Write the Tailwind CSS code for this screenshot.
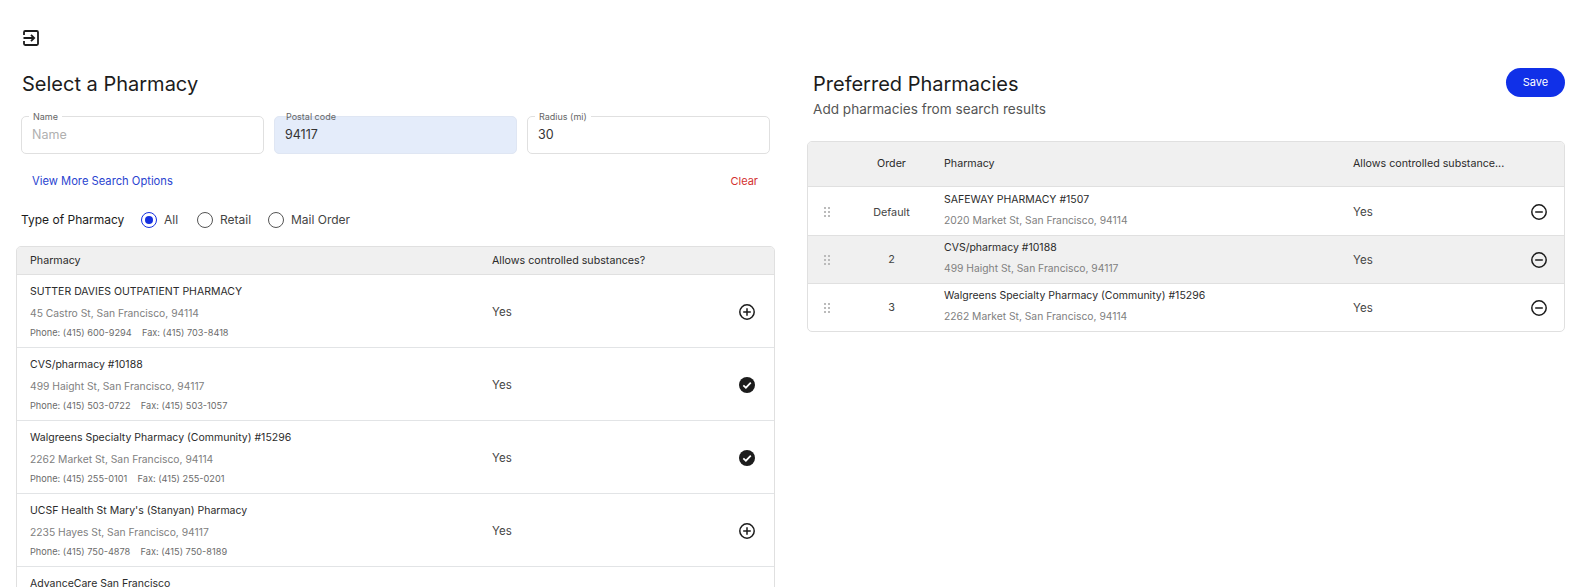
<!DOCTYPE html>
<html lang="en">
<head>
  <meta charset="UTF-8" />
  <title>Select a Pharmacy</title>
  <script src="https://cdn.jsdelivr.net/npm/@tailwindcss/browser@4"></script>
</head>
<body class="h-screen overflow-hidden bg-white text-[#2b2b2b] font-['Inter',sans-serif]">

  <!-- back icon -->
  <div class="pl-[23px] pt-[30px] h-[68px]">
    <svg class="w-[16px] h-[16px]" viewBox="0 0 16 16" fill="none" stroke="#1c1c1c" stroke-width="1.800">
      <path d="M1 5V2.200C1 1.500 1.500 1 2.200 1H13.800C14.500 1 15 1.500 15 2.200V13.800C15 14.500 14.500 15 13.800 15H2.200C1.500 15 1 14.500 1 13.800V11" />
      <path d="M0.500 8H11M8 4.800L11.200 8L8 11.200" />
    </svg>
  </div>

  <div class="flex pl-[16px] pr-[19px] gap-[32px]">

    <!-- search column -->
    <section class="w-[759px] shrink-0">
      <h1 class="ml-[6px] h-[32px] leading-[32px] text-[20px] text-[#1c1c1c]">Select a Pharmacy</h1>

      <div class="ml-[5px] mr-[5px] mt-[16px] grid grid-cols-3 gap-[10px]">
        <div class="relative h-[38px] border border-[#e0e0e0] rounded-[5px] flex items-center px-[10px] text-[12.500px] text-[#b0b0b0]">
          Name
          <span class="absolute -top-[6px] left-[7px] bg-white px-[4px] text-[9px] leading-[11px] text-[#666]">Name</span>
        </div>
        <div class="relative h-[38px] border border-[#dfe6f3] rounded-[5px] bg-[#e4ecfa] flex items-center px-[10px] text-[12.500px] text-[#333]">
          94117
          <span class="absolute -top-[6px] left-[7px] px-[4px] text-[9px] leading-[11px] text-[#666]">Postal code</span>
        </div>
        <div class="relative h-[38px] border border-[#e0e0e0] rounded-[5px] flex items-center px-[10px] text-[12.500px] text-[#333]">
          30
          <span class="absolute -top-[6px] left-[7px] bg-white px-[4px] text-[9px] leading-[11px] text-[#666]">Radius (mi)</span>
        </div>
      </div>

      <div class="mt-[19px] h-[16px] flex items-center justify-between pl-[16px] pr-[17px] text-[11px] leading-[16px]">
        <a class="text-[#2a44d0] text-[11.200px]">View More Search Options</a>
        <a class="text-[#d32f2f]">Clear</a>
      </div>

      <div class="ml-[5px] mt-[21px] h-[20px] flex items-center text-[12px] text-[#444]">
        <span class="w-[120px] text-[#1c1c1c]">Type of Pharmacy</span>
        <span class="w-[16px] h-[16px] rounded-full border-[1.500px] border-[#1530e0] flex items-center justify-center">
          <span class="w-[8px] h-[8px] rounded-full bg-[#1530e0]"></span>
        </span>
        <span class="ml-[7px] w-[33px]">All</span>
        <span class="w-[16px] h-[16px] rounded-full border-[1.500px] border-[#555]"></span>
        <span class="ml-[7px] w-[48px]">Retail</span>
        <span class="w-[16px] h-[16px] rounded-full border-[1.500px] border-[#555]"></span>
        <span class="ml-[7px]">Mail Order</span>
      </div>

      <div class="mt-[16px] border border-[#e0e0e0] rounded-[5px] overflow-hidden">
        <div class="h-[28px] pt-[1px] bg-[#f0f0f0] border-b border-[#e0e0e0] flex items-center text-[10.700px]">
          <span class="w-[475px] pl-[13px]">Pharmacy</span>
          <span>Allows controlled substances?</span>
        </div>

        <div class="h-[73px] border-b border-[#e2e4e6] flex items-center">
          <div class="w-[475px] pl-[13px]">
            <div class="text-[10.500px] leading-[22px]">SUTTER DAVIES OUTPATIENT PHARMACY</div>
            <div class="text-[10.300px] leading-[20px] text-[#808080]">45 Castro St, San Francisco, 94114</div>
            <div class="text-[9.200px] leading-[19px] text-[#6b6b6b]">Phone: (415) 600-9294 &nbsp;&nbsp; Fax: (415) 703-8418</div>
          </div>
          <span class="flex-1 pt-[3px] text-[11.500px] text-[#444]">Yes</span>
          <svg class="mr-[19px] mt-[2px] w-[16px] h-[16px]" viewBox="0 0 16 16" fill="none" stroke="#1c1c1c" stroke-width="1.500"><circle cx="8" cy="8" r="7.200"/><path d="M8 4.200V11.800M4.200 8H11.800"/></svg>
        </div>

        <div class="h-[73px] border-b border-[#e2e4e6] flex items-center">
          <div class="w-[475px] pl-[13px]">
            <div class="text-[10.500px] leading-[22px]">CVS/pharmacy #10188</div>
            <div class="text-[10.300px] leading-[20px] text-[#808080]">499 Haight St, San Francisco, 94117</div>
            <div class="text-[9.200px] leading-[19px] text-[#6b6b6b]">Phone: (415) 503-0722 &nbsp;&nbsp; Fax: (415) 503-1057</div>
          </div>
          <span class="flex-1 pt-[3px] text-[11.500px] text-[#444]">Yes</span>
          <svg class="mr-[19px] mt-[2px] w-[16px] h-[16px]" viewBox="0 0 16 16"><circle cx="8" cy="8" r="8" fill="#1c1c1c"/><path d="M4.300 8.300L6.900 10.700L11.800 5.600" fill="none" stroke="#fff" stroke-width="1.700"/></svg>
        </div>

        <div class="h-[73px] border-b border-[#e2e4e6] flex items-center">
          <div class="w-[475px] pl-[13px]">
            <div class="text-[10.500px] leading-[22px]">Walgreens Specialty Pharmacy (Community) #15296</div>
            <div class="text-[10.300px] leading-[20px] text-[#808080]">2262 Market St, San Francisco, 94114</div>
            <div class="text-[9.200px] leading-[19px] text-[#6b6b6b]">Phone: (415) 255-0101 &nbsp;&nbsp; Fax: (415) 255-0201</div>
          </div>
          <span class="flex-1 pt-[3px] text-[11.500px] text-[#444]">Yes</span>
          <svg class="mr-[19px] mt-[2px] w-[16px] h-[16px]" viewBox="0 0 16 16"><circle cx="8" cy="8" r="8" fill="#1c1c1c"/><path d="M4.300 8.300L6.900 10.700L11.800 5.600" fill="none" stroke="#fff" stroke-width="1.700"/></svg>
        </div>

        <div class="h-[73px] border-b border-[#e2e4e6] flex items-center">
          <div class="w-[475px] pl-[13px]">
            <div class="text-[10.500px] leading-[22px]">UCSF Health St Mary's (Stanyan) Pharmacy</div>
            <div class="text-[10.300px] leading-[20px] text-[#808080]">2235 Hayes St, San Francisco, 94117</div>
            <div class="text-[9.200px] leading-[19px] text-[#6b6b6b]">Phone: (415) 750-4878 &nbsp;&nbsp; Fax: (415) 750-8189</div>
          </div>
          <span class="flex-1 pt-[3px] text-[11.500px] text-[#444]">Yes</span>
          <svg class="mr-[19px] mt-[2px] w-[16px] h-[16px]" viewBox="0 0 16 16" fill="none" stroke="#1c1c1c" stroke-width="1.500"><circle cx="8" cy="8" r="7.200"/><path d="M8 4.200V11.800M4.200 8H11.800"/></svg>
        </div>

        <div class="h-[73px] flex items-center">
          <div class="w-[475px] pl-[13px]">
            <div class="text-[10.500px] leading-[22px]">AdvanceCare San Francisco</div>
            <div class="text-[10.300px] leading-[20px] text-[#808080]">&nbsp;</div>
            <div class="text-[9.200px] leading-[19px] text-[#6b6b6b]">&nbsp;</div>
          </div>
        </div>
      </div>
    </section>

    <!-- preferred column -->
    <section class="flex-1 min-w-0">
      <div class="flex items-start justify-between h-[73px]">
        <div class="pl-[6px]">
          <h2 class="h-[32px] leading-[32px] text-[20px] text-[#1c1c1c]">Preferred Pharmacies</h2>
          <p class="text-[13.600px] leading-[18px] text-[#555]">Add pharmacies from search results</p>
        </div>
        <button class="h-[29px] w-[59px] rounded-full bg-[#1030e8] text-white text-[11px]">Save</button>
      </div>

      <div class="border border-[#e0e0e0] rounded-[5px] overflow-hidden">
        <div class="h-[45px] pt-[1px] bg-[#f0f0f0] border-b border-[#e0e0e0] flex items-center text-[10.700px]">
          <span class="w-[136px] pl-[31px] text-center">Order</span>
          <span class="w-[409px]">Pharmacy</span>
          <span>Allows controlled substance...</span>
        </div>

        <div class="h-[49px] pt-[2px] border-b border-[#e0e0e0] flex items-center">
          <svg class="ml-[15px] w-[8px] h-[10px]" viewBox="0 0 8 10" fill="#bbb"><rect x="1" y="0" width="2" height="2"/><rect x="5" y="0" width="2" height="2"/><rect x="1" y="4" width="2" height="2"/><rect x="5" y="4" width="2" height="2"/><rect x="1" y="8" width="2" height="2"/><rect x="5" y="8" width="2" height="2"/></svg>
          <span class="w-[113px] pl-[8px] pt-[2px] text-center text-[10.800px] text-[#444]">Default</span>
          <div class="w-[409px] pb-[4px]">
            <div class="text-[10.500px] leading-[21px]">SAFEWAY PHARMACY #1507</div>
            <div class="text-[10.300px] leading-[21px] text-[#808080]">2020 Market St, San Francisco, 94114</div>
          </div>
          <span class="flex-1 pt-[2px] text-[11.500px] text-[#444]">Yes</span>
          <svg class="mr-[17px] w-[16px] h-[16px]" viewBox="0 0 16 16" fill="none" stroke="#1c1c1c" stroke-width="1.500"><circle cx="8" cy="8" r="7.200"/><path d="M4.200 8H11.800"/></svg>
        </div>

        <div class="h-[48px] bg-[#f0f0f0] border-b border-[#e0e0e0] flex items-center">
          <svg class="ml-[15px] w-[8px] h-[10px]" viewBox="0 0 8 10" fill="#bbb"><rect x="1" y="0" width="2" height="2"/><rect x="5" y="0" width="2" height="2"/><rect x="1" y="4" width="2" height="2"/><rect x="5" y="4" width="2" height="2"/><rect x="1" y="8" width="2" height="2"/><rect x="5" y="8" width="2" height="2"/></svg>
          <span class="w-[113px] pl-[8px] pt-[2px] text-center text-[10.800px] text-[#444]">2</span>
          <div class="w-[409px] pb-[3px]">
            <div class="text-[10.500px] leading-[21px]">CVS/pharmacy #10188</div>
            <div class="text-[10.300px] leading-[21px] text-[#808080]">499 Haight St, San Francisco, 94117</div>
          </div>
          <span class="flex-1 pt-[2px] text-[11.500px] text-[#444]">Yes</span>
          <svg class="mr-[17px] w-[16px] h-[16px]" viewBox="0 0 16 16" fill="none" stroke="#1c1c1c" stroke-width="1.500"><circle cx="8" cy="8" r="7.200"/><path d="M4.200 8H11.800"/></svg>
        </div>

        <div class="h-[47px] flex items-center">
          <svg class="ml-[15px] w-[8px] h-[10px]" viewBox="0 0 8 10" fill="#bbb"><rect x="1" y="0" width="2" height="2"/><rect x="5" y="0" width="2" height="2"/><rect x="1" y="4" width="2" height="2"/><rect x="5" y="4" width="2" height="2"/><rect x="1" y="8" width="2" height="2"/><rect x="5" y="8" width="2" height="2"/></svg>
          <span class="w-[113px] pl-[8px] pt-[2px] text-center text-[10.800px] text-[#444]">3</span>
          <div class="w-[409px] pb-[3px]">
            <div class="text-[10.500px] leading-[21px]">Walgreens Specialty Pharmacy (Community) #15296</div>
            <div class="text-[10.300px] leading-[21px] text-[#808080]">2262 Market St, San Francisco, 94114</div>
          </div>
          <span class="flex-1 pt-[2px] text-[11.500px] text-[#444]">Yes</span>
          <svg class="mr-[17px] w-[16px] h-[16px]" viewBox="0 0 16 16" fill="none" stroke="#1c1c1c" stroke-width="1.500"><circle cx="8" cy="8" r="7.200"/><path d="M4.200 8H11.800"/></svg>
        </div>
      </div>
    </section>
  </div>
</body>
</html>
